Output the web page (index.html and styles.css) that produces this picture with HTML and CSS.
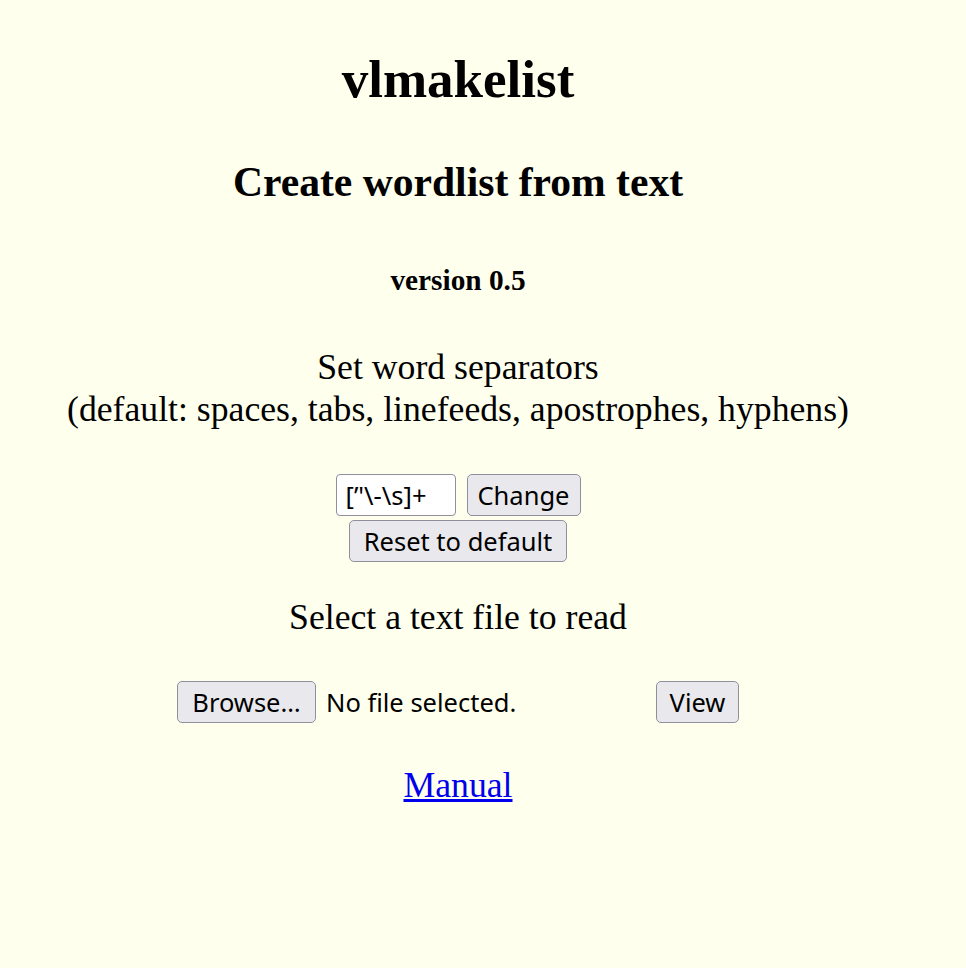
FILE: index.html
```html
<!DOCTYPE html>
<html lang="en">
<head>
<meta charset="utf-8">
<title>vlmakelist</title>
<link rel="stylesheet" href="styles.css">
</head>
<body>
<div class="page">
  <h1 class="title">vlmakelist</h1>
  <h2 class="subtitle">Create wordlist from text</h2>
  <h3 class="version">version 0.5</h3>
  <p class="intro">Set word separators<br>(default: spaces, tabs, linefeeds, apostrophes, hyphens)</p>
  <div class="sep-row">
    <input class="sep-input" type="text" value="[’'\-\s]+">
    <button class="btn btn-change" type="button">Change</button>
  </div>
  <div class="reset-row">
    <button class="btn btn-reset" type="button">Reset to default</button>
  </div>
  <p class="select">Select a text file to read</p>
  <div class="file-row">
    <div class="file-input">
      <button class="btn btn-browse" type="button">Browse…</button>
      <span class="file-name">No file selected.</span>
    </div>
    <button class="btn btn-view" type="button">View</button>
  </div>
  <p class="manual"><a class="manual-link" href="#">Manual</a></p>
</div>
</body>
</html>
```

FILE: styles.css
```css
html, body {
  margin: 0;
  padding: 0;
  background: #ffffee;
}
body {
  font-family: "Liberation Serif", "Times New Roman", serif;
  color: #000;
}
.page {
  width: 900px;
  margin: 0 0 0 8px;
  text-align: center;
  padding-bottom: 40px;
}
.title {
  margin: 49px 0 0;
  font-size: 53px;
  line-height: 61px;
  font-weight: bold;
}
.subtitle {
  margin: 48px 0 0;
  font-size: 41.6px;
  line-height: 48px;
  font-weight: bold;
}
.version {
  margin: 57px 0 0;
  font-size: 29.3px;
  line-height: 34px;
  font-weight: bold;
}
.intro,
.select,
.manual {
  font-size: 35.7px;
  line-height: 42px;
}
.intro {
  margin: 49px 0 0;
}
.select {
  margin: 34px 0 0;
}
.manual {
  margin: 41px 0 0;
}
.manual-link {
  color: #0000ee;
  text-decoration: underline;
}
.sep-row,
.reset-row,
.file-row {
  display: flex;
  justify-content: center;
  align-items: center;
}
.sep-row {
  margin-top: 44px;
  gap: 11px;
}
.reset-row {
  margin-top: 4px;
}
.file-row {
  margin-top: 43px;
  gap: 9px;
}
.btn,
.sep-input,
.file-name {
  font-family: "Noto Sans", "Open Sans", sans-serif;
  font-size: 25.5px;
  color: #000;
}
.btn {
  box-sizing: border-box;
  height: 42px;
  padding: 0;
  background: #e9e9ed;
  border: 1px solid #8f8f9d;
  border-radius: 5px;
  line-height: 38px;
  text-align: center;
}
.sep-input {
  box-sizing: border-box;
  width: 120px;
  height: 42px;
  padding: 0 0 0 9px;
  background: #fff;
  border: 1px solid #8f8f9d;
  border-radius: 4px;
  outline: none;
}
.btn-change { width: 114px; }
.btn-reset { width: 218px; }
.btn-browse { width: 139px; }
.btn-view { width: 83px; }
.file-input {
  width: 470px;
  display: flex;
  align-items: center;
  gap: 10px;
  text-align: left;
}
.file-name {
  line-height: 42px;
}
```
